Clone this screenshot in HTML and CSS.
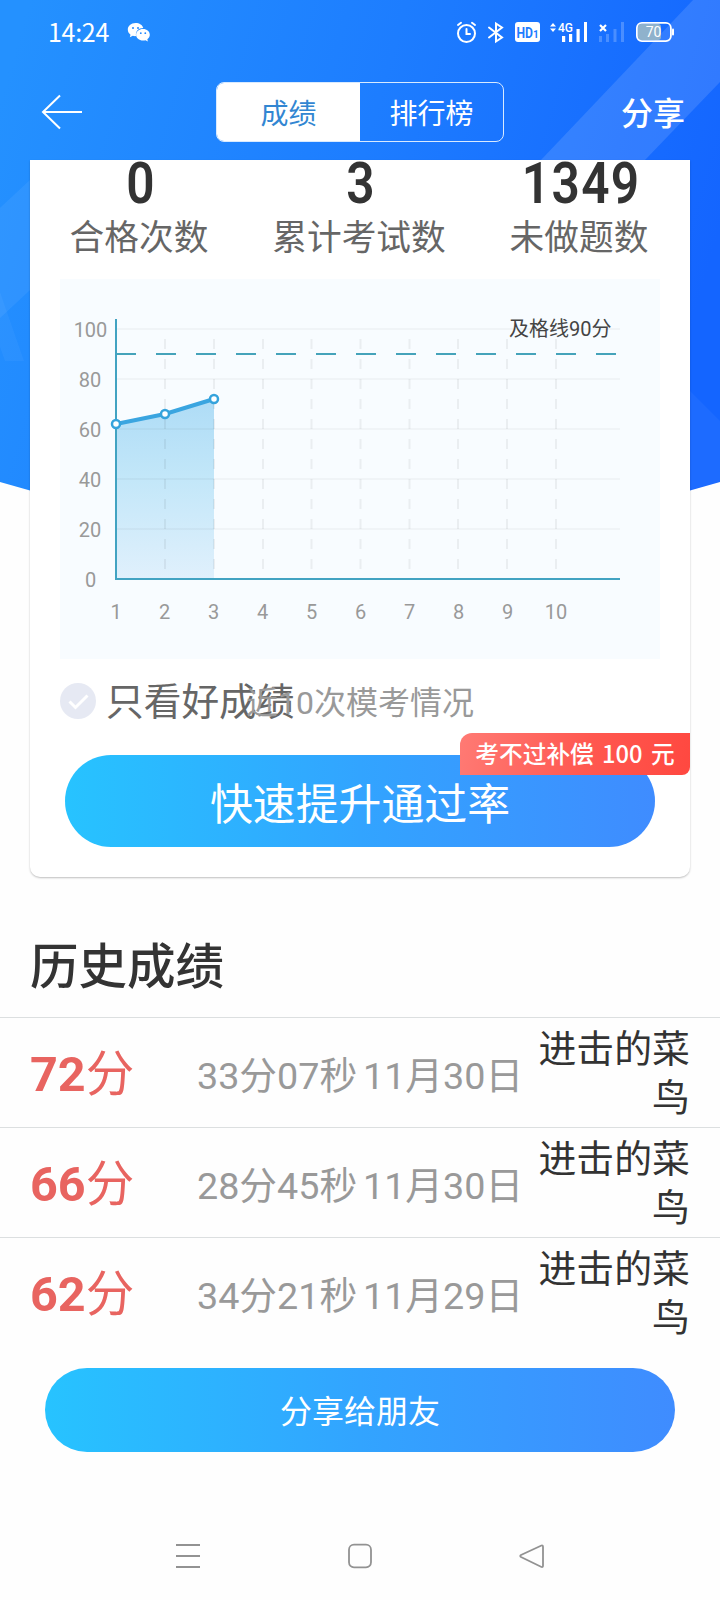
FILE: index.html
```html
<!DOCTYPE html>
<html lang="zh-CN">
<head>
<meta charset="utf-8">
<title>成绩</title>
<link rel="stylesheet" href="styles.css">
</head>
<body>
<div class="screen">
  <svg class="hero" width="720" height="492" viewBox="0 0 720 492" aria-hidden="true">
    <defs>
      <linearGradient id="sky" gradientUnits="userSpaceOnUse" x1="0" y1="100" x2="700" y2="300">
        <stop offset="0" stop-color="#2491ff"/><stop offset=".5" stop-color="#1d7dff"/><stop offset="1" stop-color="#1465ff"/>
      </linearGradient>
    </defs>
    <path d="M0 0H720V482L690 490.5H30L0 482Z" fill="url(#sky)"/>
    <g fill="#fff">
      <path d="M693 0H720V82L645 160H541Z" fill-opacity=".12"/>
      <path d="M0 208L30 180V290L0 318Z" fill-opacity=".06"/>
      <path d="M0 292L24 361H5L0 347Z" fill-opacity=".04"/>
      <path d="M690 391L720 421V482L690 490Z" fill-opacity=".04"/>
    </g>
  </svg>

  <div class="status">
    <span class="clock">14:24</span>
    <svg class="wechat" width="24" height="20" viewBox="0 0 24 20">
      <path d="M8.5 1C4 1 .8 4 .8 7.600c0 2.100 1 3.900 2.700 5.100L2.800 15.300l3-1.500c1 .3 2 .4 3.300.3C8 9.500 11.500 6 16.300 6 15.500 3 12.500 1 8.500 1Z" fill="#fff"/>
      <path d="M16 7c-4 0-6.900 2.600-6.900 5.800s2.900 5.800 6.900 5.800c.9 0 1.700-.1 2.500-.4l2.400 1.300-.6-2.200c1.600-1.100 2.500-2.700 2.500-4.500C22.800 9.600 20 7 16 7Z" fill="#fff"/>
      <g fill="#2187ff"><circle cx="6" cy="6" r="1"/><circle cx="11" cy="6" r="1"/><circle cx="13.800" cy="11.200" r=".9"/><circle cx="18.300" cy="11.200" r=".9"/></g>
    </svg>
    <svg class="indicators" width="230" height="28" viewBox="450 18 230 28">
      <g fill="none" stroke="#fff" stroke-width="2" stroke-linecap="round">
        <circle cx="466.500" cy="33.500" r="8.500"/><path d="M466.500 29V34H470M458 25l3-2.200M475 25l-3-2.200"/>
        <path d="M489 27.500L502 37.500 496 41.500V23.500L502 27.500 489 37.500" stroke-width="2"/>
      </g>
      <rect x="515" y="22" width="25" height="20" rx="3" fill="#fff"/>
      <text class="hd" x="516.500" y="37.500" textLength="16.500" lengthAdjust="spacingAndGlyphs">HD</text>
      <text class="hd hd-one" x="533" y="37.500">1</text>
      <path d="M550 26.500L553 23l3 3.500M550 28.500L553 32l3-3.500Z" fill="#fff"/>
      <text class="net" x="558" y="32" textLength="15" lengthAdjust="spacingAndGlyphs">4G</text>
      <path d="M562 36h3.200v6H562ZM569 34h3.200v8H569ZM576.500 29h3.200v13h-3.200ZM584 22h3v20h-3Z" fill="#fff"/>
      <path d="M600 25l6 6M606 25l-6 6" stroke="#fff" stroke-width="2.200"/>
      <path d="M599 36h3v6h-3ZM606 34h3v8h-3ZM613.500 29h3v13h-3ZM621 22h3v20h-3Z" fill="#fff" fill-opacity=".22"/>
      <rect x="638" y="24" width="23" height="16" rx="3" fill="#8fb2cc"/>
      <rect x="636.900" y="22.900" width="34" height="18.200" rx="5" fill="none" stroke="#fff" stroke-width="1.800"/>
      <rect x="672" y="28.500" width="2" height="7" rx="1" fill="#fff"/>
      <text class="power" x="653.500" y="37">70</text>
    </svg>
  </div>

  <div class="nav">
    <svg class="back" width="42" height="38" viewBox="0 0 42 38" fill="none" stroke="#fff" stroke-width="2">
      <path d="M19 2.500L2 19 19 35.500M2 19H41"/>
    </svg>
    <div class="tabs"><span class="tab active">成绩</span><span class="tab">排行榜</span></div>
    <span class="share">分享</span>
  </div>

  <section class="card">
    <div class="stats">
      <div class="stat"><b class="value">0</b><span class="label">合格次数</span></div>
      <div class="stat"><b class="value">3</b><span class="label">累计考试数</span></div>
      <div class="stat"><b class="value">1349</b><span class="label">未做题数</span></div>
    </div>

    <svg class="chart" width="600" height="380" viewBox="60 279 600 380">
      <defs>
        <linearGradient id="area" x1="0" y1="0" x2="0" y2="1">
          <stop offset="0" stop-color="#aedcf6"/><stop offset=".45" stop-color="#c3e7f9"/><stop offset="1" stop-color="#e0f0fc"/>
        </linearGradient>
      </defs>
      <path d="M116 424L165 414 214 399V579H116Z" fill="url(#area)"/>
      <path d="M116 329H620M116 379H620M116 429H620M116 479H620M116 529H620" stroke="#000" stroke-opacity=".03" stroke-width="2"/>
      <path d="M165 339V569M214 339V569M263 339V569M311.500 339V569M360.500 339V569M409.500 339V569M458 339V569M507 339V569M556 339V569" stroke="#000" stroke-opacity=".055" stroke-width="2" stroke-dasharray="10 10"/>
      <path d="M116 354H620" stroke="#45a3ba" stroke-width="2" stroke-dasharray="20 20"/>
      <path d="M116 319V579H620" fill="none" stroke="#42a3c2" stroke-width="2"/>
      <path d="M116 424L165 414 214 399" fill="none" stroke="#3aa5e0" stroke-width="4"/>
      <g fill="#fff" stroke="#35a3dc" stroke-width="2.500"><circle cx="116" cy="424" r="4"/><circle cx="165" cy="414" r="4"/><circle cx="214" cy="399" r="4"/></g>
      <g class="tick">
        <text x="90.500" y="337">100</text><text x="90" y="387">80</text><text x="90" y="437">60</text><text x="90" y="487">40</text><text x="90" y="537">20</text><text x="90.500" y="587">0</text>
        <text x="116" y="619">1</text><text x="164.500" y="619">2</text><text x="213.500" y="619">3</text><text x="262.500" y="619">4</text><text x="311.500" y="619">5</text><text x="360.500" y="619">6</text><text x="409.500" y="619">7</text><text x="458.500" y="619">8</text><text x="507.500" y="619">9</text><text x="556" y="619">10</text>
      </g>
      <text class="pass" x="509" y="335.500">及格线90分</text>
    </svg>

    <div class="filter">
      <svg width="36" height="36" viewBox="0 0 36 36"><circle cx="18" cy="18" r="18" fill="#e6e9f3"/><path d="M9.500 18.500L15.500 24.500 27.500 12.500" fill="none" stroke="#fff" stroke-width="3"/></svg>
      <span class="filter-text">只看好成绩</span>
      <span class="recent">近10次模考情况</span>
    </div>

    <div class="boost-wrap">
      <div class="pill boost">快速提升通过率</div>
      <span class="badge">考不过补偿 100 元</span>
    </div>
  </section>

  <h2 class="title">历史成绩</h2>
  <div class="rows">
    <div class="row"><span class="score"><b>72</b>分</span><span class="time">33分07秒</span><span class="date">11月30日</span><span class="name">进击的菜鸟</span></div>
    <div class="row"><span class="score"><b>66</b>分</span><span class="time">28分45秒</span><span class="date">11月30日</span><span class="name">进击的菜鸟</span></div>
    <div class="row"><span class="score"><b>62</b>分</span><span class="time">34分21秒</span><span class="date">11月29日</span><span class="name">进击的菜鸟</span></div>
  </div>

  <div class="pill invite">分享给朋友</div>

  <div class="system-nav">
    <svg width="26" height="26" viewBox="0 0 26 26"><path d="M1 2H25M1 13H25M1 24H25"/></svg>
    <svg width="26" height="26" viewBox="0 0 26 26"><rect x="2" y="1.700" width="22" height="22.600" rx="5"/></svg>
    <svg width="26" height="26" viewBox="0 0 26 26"><path d="M22.500 2.500L2 12Q.5 13 2 14L22.500 24Q24 24.500 24 22.500V4Q24 2 22.500 2.500Z"/></svg>
  </div>
</div>
</body>
</html>
```
FILE: styles.css
```css
* { box-sizing: border-box; }
body { margin: 0; background: #fefefe; }
.screen {
  position: relative;
  width: 720px;
  height: 1600px;
  overflow: hidden;
  display: flex;
  flex-direction: column;
  font-family: Roboto, "Noto Sans CJK SC", sans-serif;
  color: #333;
}
.hero { position: absolute; left: 0; top: 0; z-index: -1; }

.status { height: 64px; padding: 0 40px 0 48px; display: flex; align-items: center; }
.clock { font: 25px/1 "Noto Sans CJK SC", sans-serif; color: #fff; width: 79px; padding-bottom: 2px; letter-spacing: -.3px; }
.indicators { margin-left: auto; }
.hd { font: bold 15px Roboto, sans-serif; fill: #1e7cff; }
.hd-one { font-size: 10px; }
.net { font: 500 13px Roboto, sans-serif; fill: #fff; }
.power { font: 14px Roboto, sans-serif; fill: #fff; text-anchor: middle; }

.nav { height: 96px; padding: 0 35px 0 41px; display: flex; align-items: center; color: #fff; }
.tabs {
  width: 288px;
  height: 60px;
  margin-left: 133px;
  display: flex;
  border: 1px solid #d8eaff;
  border-radius: 8px;
  overflow: hidden;
  font-size: 28px;
}
.tab { flex: 1; display: flex; align-items: center; justify-content: center; padding-bottom: 1px; }
.tab.active { background: #fff; color: #3286d2; }
.share { margin-left: auto; padding-bottom: 2px; font-size: 32px; font-weight: 500; }

.card {
  width: 660px;
  height: 717px;
  margin: 0 30px;
  padding: 0 30px;
  background: #fff;
  border-radius: 0 0 10px 10px;
  box-shadow: 0 1px 2px rgba(0, 0, 0, .25);
}
.stats { height: 119px; margin: 0 -30px; display: grid; grid-template-columns: repeat(3, 1fr); }
.stat { display: flex; flex-direction: column; align-items: center; }
.value {
  height: 53px;
  margin-right: -1.500px;
  padding-top: 2px;
  font-size: 57px;
  line-height: 44px;
  font-weight: 600;
  letter-spacing: 1.500px;
  transform: scaleX(.87);
}
.label { font-size: 34.700px; line-height: 50px; color: #666; margin-left: -2px; }
.chart { display: block; background: #f8fcff; }
.tick { font: 20px Roboto, sans-serif; fill: #999; text-anchor: middle; }
.pass { font-size: 20px; fill: #444; }

.filter { position: relative; height: 84px; display: flex; align-items: center; gap: 10px; }
.filter-text { padding-bottom: 5px; font-size: 37.700px; color: #666; }
.recent { position: absolute; left: 0; right: 0; top: 20px; text-align: center; font-size: 32px; line-height: 48px; color: #999; }

.pill {
  display: flex;
  align-items: center;
  justify-content: center;
  border-radius: 46px;
  background: linear-gradient(90deg, #27c3ff, #32a4ff 50%, #3f8cff);
  color: #fff;
}
.boost-wrap { position: relative; padding: 12px 5px 0; }
.boost { height: 92px; font-size: 42.900px; }
.badge {
  position: absolute;
  right: -30px;
  top: -10px;
  width: 230px;
  height: 42px;
  border-radius: 12px 0 8px 0;
  background: linear-gradient(100deg, #ff7a74, #ff5850 55%, #ff4840);
  color: #fff;
  font: 500 23.700px/41px "Noto Sans CJK SC", sans-serif;
  text-align: center;
  white-space: nowrap;
  word-spacing: 3px;
}

.title { margin: 55px 30px 0; height: 85px; font-size: 48.500px; line-height: 72px; font-weight: 500; }
.row {
  height: 110px;
  padding: 0 30px;
  display: grid;
  grid-template-columns: 167px 166px 145px 182px;
  align-items: center;
  border-top: 1px solid #dcdfe0;
  font-size: 37.700px;
  color: #999;
}
.score { padding-bottom: 5px; font-size: 48.500px; color: #e86460; }
.score b { font-weight: 700; }
.time, .date { white-space: nowrap; padding-bottom: 1px; }
.name { padding: 3px 0 0 29px; color: #333; font-size: 37.900px; line-height: 49.500px; text-align: right; word-break: break-all; }

.invite { flex: none; height: 84px; margin: 21px 45px 0; padding-bottom: 3px; font-size: 32px; }
.system-nav { margin-top: 91px; padding: 0 175px; display: flex; justify-content: space-between; }
.system-nav svg { fill: none; stroke: #929292; stroke-width: 1.800; }
```
